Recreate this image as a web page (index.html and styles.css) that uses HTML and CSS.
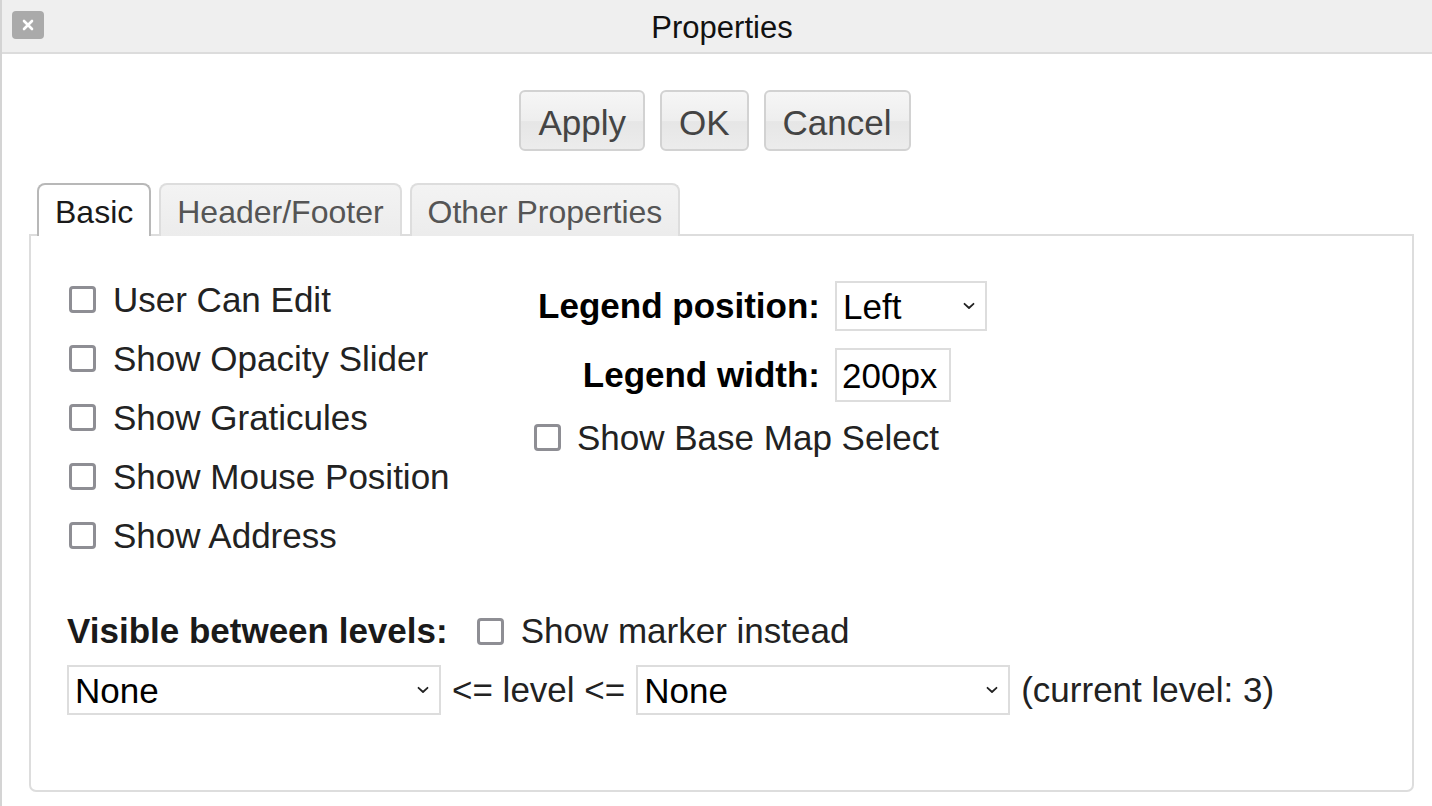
FILE: index.html
```html
<!DOCTYPE html>
<html lang="en">
<head>
<meta charset="utf-8">
<title>Properties</title>
<link rel="stylesheet" href="styles.css">
</head>
<body>
<div class="dialog">
  <div class="titlebar">
    <button class="close" aria-label="Close">
      <svg width="12" height="12" viewBox="0 0 12 12"><path d="M2 2L10 10M10 2L2 10" stroke="#fff" stroke-width="2.6" stroke-linecap="round"/></svg>
    </button>
    <div class="title">Properties</div>
    <div class="spacer"></div>
  </div>

  <div class="actions">
    <button class="btn btn-apply">Apply</button>
    <button class="btn btn-ok">OK</button>
    <button class="btn btn-cancel">Cancel</button>
  </div>

  <div class="tabs">
    <div class="tab active">Basic</div>
    <div class="tab">Header/Footer</div>
    <div class="tab">Other Properties</div>
  </div>

  <div class="panel">
    <div class="upper">
      <div class="col-left">
        <label class="check"><span class="box"></span><span>User Can Edit</span></label>
        <label class="check"><span class="box"></span><span>Show Opacity Slider</span></label>
        <label class="check"><span class="box"></span><span>Show Graticules</span></label>
        <label class="check"><span class="box"></span><span>Show Mouse Position</span></label>
        <label class="check"><span class="box"></span><span>Show Address</span></label>
      </div>
      <div class="col-right">
        <div class="form-grid">
          <span class="flabel">Legend position:</span>
          <div class="select select-pos">
            <span class="sel-text">Left</span>
            <svg class="chev" width="12" height="8" viewBox="0 0 12 8"><path d="M1.5 1.8L6 6L10.5 1.8" fill="none" stroke="#222" stroke-width="1.8" stroke-linecap="round" stroke-linejoin="round"/></svg>
          </div>
          <span class="flabel">Legend width:</span>
          <div class="input">200px</div>
        </div>
        <label class="check check-base"><span class="box"></span><span>Show Base Map Select</span></label>
      </div>
    </div>

    <div class="levels">
      <div class="levels-head">
        <span class="blabel">Visible between levels:</span>
        <label class="check check-inline"><span class="box"></span><span>Show marker instead</span></label>
      </div>
      <div class="levels-row">
        <div class="select select-level">
          <span class="sel-text">None</span>
          <svg class="chev" width="12" height="8" viewBox="0 0 12 8"><path d="M1.5 1.8L6 6L10.5 1.8" fill="none" stroke="#222" stroke-width="1.8" stroke-linecap="round" stroke-linejoin="round"/></svg>
        </div>
        <span class="txt">&lt;= level &lt;=</span>
        <div class="select select-level">
          <span class="sel-text">None</span>
          <svg class="chev" width="12" height="8" viewBox="0 0 12 8"><path d="M1.5 1.8L6 6L10.5 1.8" fill="none" stroke="#222" stroke-width="1.8" stroke-linecap="round" stroke-linejoin="round"/></svg>
        </div>
        <span class="txt">(current level: 3)</span>
      </div>
    </div>
  </div>
</div>
</body>
</html>
```

FILE: styles.css
```css
* { box-sizing: border-box; }

html, body {
  margin: 0;
  padding: 0;
  background: #ffffff;
}

body {
  font-family: "Liberation Sans", Arial, sans-serif;
  color: #222;
}

.dialog {
  border-left: 2px solid #d4d4d4;
  min-height: 806px;
  width: 1432px;
}

/* Title bar */
.titlebar {
  height: 54px;
  background: #efefef;
  border-bottom: 2px solid #dcdcdc;
  display: grid;
  grid-template-columns: 1fr auto 1fr;
  align-items: center;
  padding-left: 10px;
}

.close {
  justify-self: start;
  width: 32px;
  height: 28px;
  border: none;
  border-radius: 4px;
  background: #aaaaaa;
  display: flex;
  align-items: center;
  justify-content: center;
  padding: 0;
  margin-top: -2px;
}

.title {
  font-size: 31px;
  color: #111;
  padding-top: 3px;
}

/* Action buttons */
.actions {
  display: flex;
  justify-content: center;
  gap: 15px;
  margin-top: 36px;
  padding-right: 4px;
}

.btn {
  font-family: "Liberation Sans", Arial, sans-serif;
  font-size: 35px;
  color: #444;
  height: 61px;
  padding: 3px 17px 0;
  border: 2px solid #d2d2d2;
  border-radius: 6px;
  background: linear-gradient(to bottom, #f6f6f6 0%, #eeeeee 50%, #e6e6e6 52%, #ececec 100%);
  line-height: 1;
}

/* Tabs */
.tabs {
  display: flex;
  gap: 8px;
  margin-top: 32px;
  margin-left: 27px;
  padding-left: 8px;
  position: relative;
  z-index: 1;
}

.tab {
  font-size: 32px;
  color: #555;
  height: 53px;
  padding: 9px 16px 0;
  border: 2px solid #dddddd;
  border-bottom: none;
  border-radius: 8px 8px 0 0;
  background: linear-gradient(to bottom, #f3f3f3 0%, #ececec 100%);
  line-height: 37px;
}

.tab.active {
  background: #ffffff;
  color: #1a1a1a;
  border-color: #b8b8b8;
}

/* Panel */
.panel {
  margin-left: 27px;
  margin-right: 18px;
  margin-top: -2px;
  height: 558px;
  border: 2px solid #dddddd;
  border-radius: 0 0 7px 7px;
  padding: 34px 0 0 38px;
}

.upper {
  display: flex;
}

.col-left {
  width: 465px;
  display: flex;
  flex-direction: column;
}

.check {
  display: flex;
  align-items: center;
  height: 59px;
  font-size: 35px;
  color: #222;
  gap: 17px;
}

.box {
  flex: none;
  width: 27px;
  height: 27px;
  border: 3px solid #8e8e94;
  border-radius: 4px;
  background: #fff;
}

.col-right {
  display: flex;
  flex-direction: column;
}

.form-grid {
  display: grid;
  grid-template-columns: 286px auto;
  column-gap: 15px;
  row-gap: 17px;
  align-items: center;
  margin-top: 11px;
}

.flabel {
  justify-self: end;
  font-weight: bold;
  font-size: 35px;
  color: #000;
}

.select {
  position: relative;
  display: flex;
  align-items: center;
  height: 50px;
  border: 2px solid #dddddd;
  background: #fff;
  font-size: 35px;
  color: #000;
  padding-left: 6px;
}

.sel-text {
  line-height: 1;
}

.chev {
  position: absolute;
  right: 10px;
  top: 19px;
}

.select-pos {
  width: 152px;
}

.input {
  width: 116px;
  height: 54px;
  border: 2px solid #dddddd;
  font-size: 35px;
  color: #000;
  display: flex;
  align-items: center;
  padding-left: 5px;
  padding-top: 2px;
}

.check-base {
  margin-top: 6px;
  gap: 16px;
}

/* Levels */
.levels {
  margin-top: 41px;
  margin-left: -2px;
}

.levels-head {
  display: flex;
  align-items: center;
  height: 50px;
}

.blabel {
  font-weight: bold;
  font-size: 35px;
  color: #1a1a1a;
}

.check-inline {
  margin-left: 29px;
  height: 50px;
}

.levels-row {
  display: flex;
  align-items: center;
  gap: 11px;
  margin-top: 9px;
}

.select-level {
  width: 374px;
}

.txt {
  font-size: 35px;
  color: #222;
}
```
